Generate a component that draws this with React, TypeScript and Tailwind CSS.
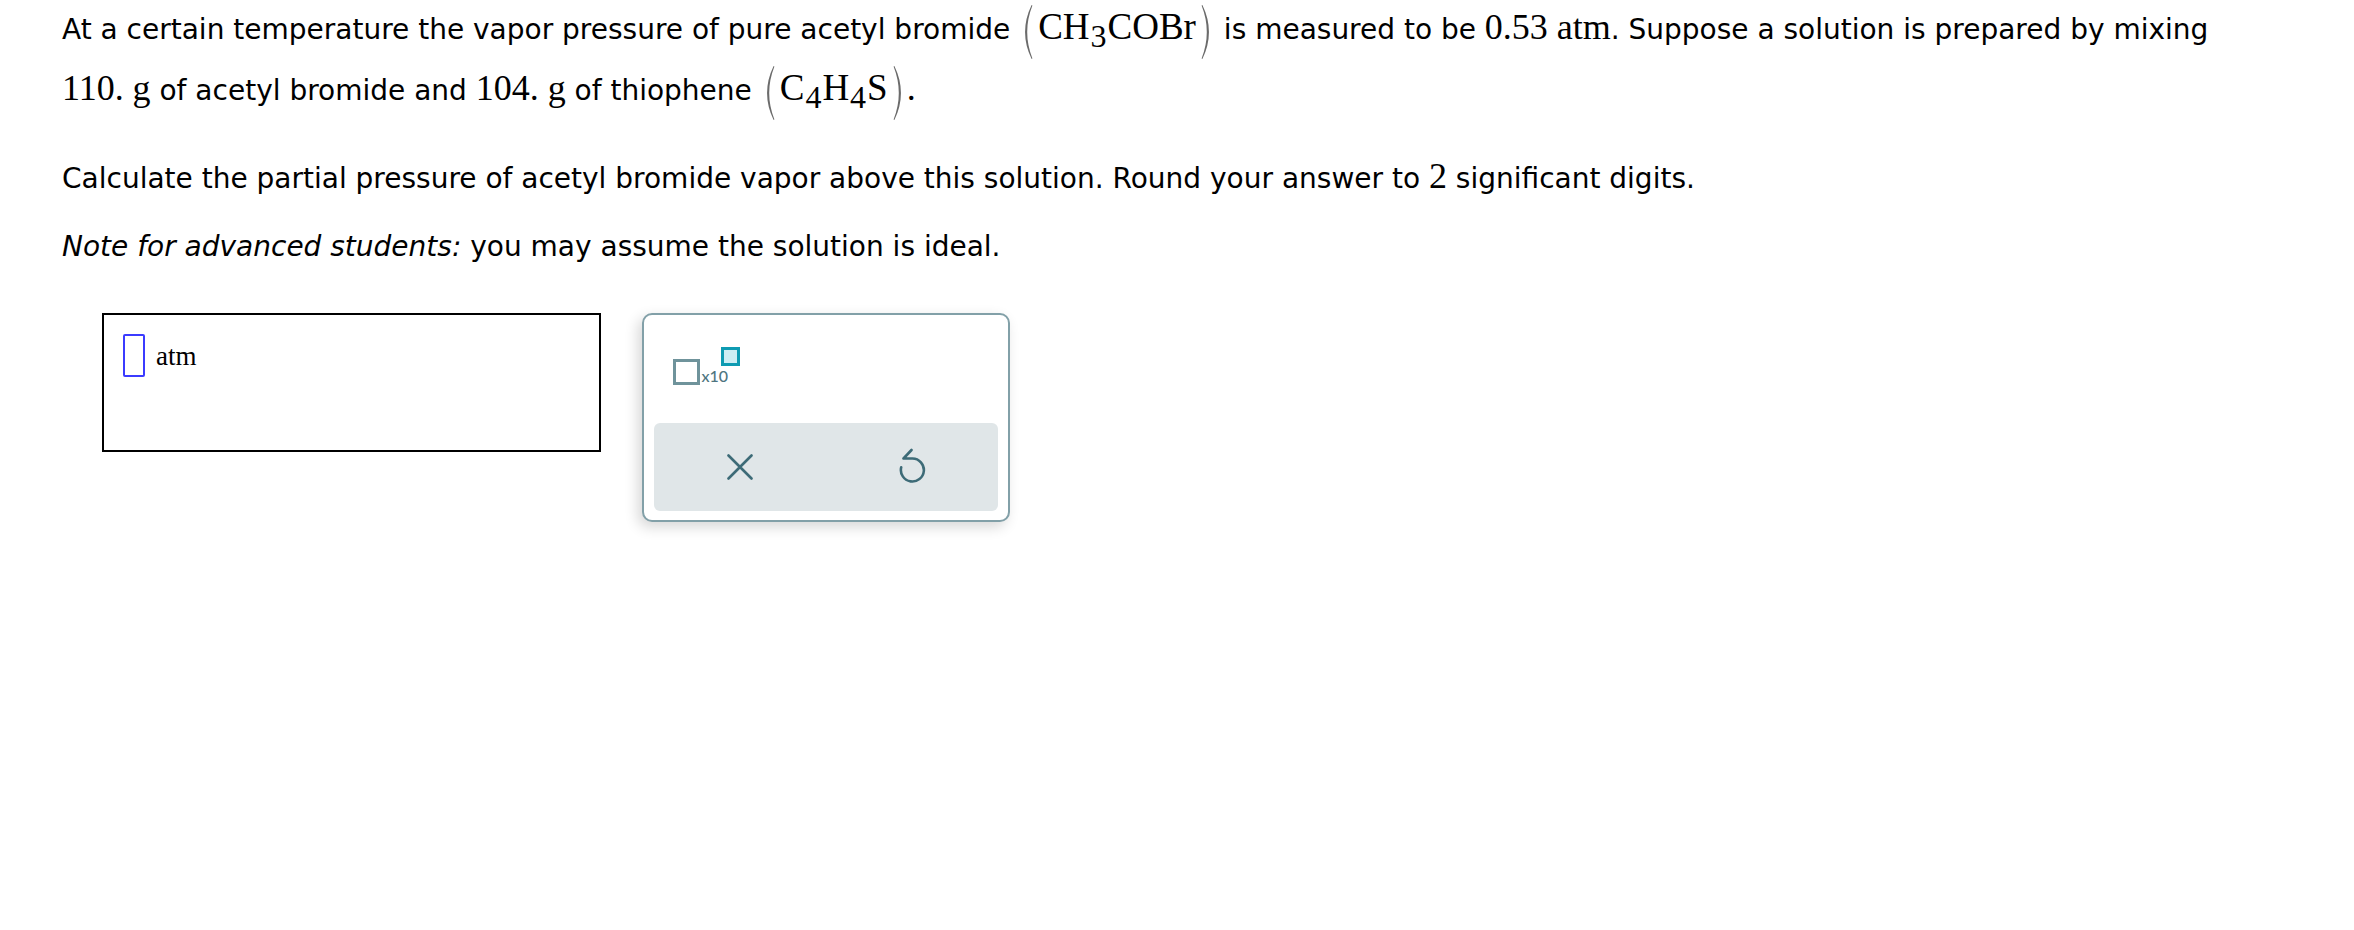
import React from 'react';

const M: React.FC<{ children: React.ReactNode; big?: boolean }> = ({ children, big }) => (
  <span className={`font-['Liberation_Serif',serif] leading-none ${big ? 'text-[37px]' : 'text-[36px]'}`}>{children}</span>
);

const Sub: React.FC<{ children: React.ReactNode }> = ({ children }) => (
  <span className="relative top-[8px] mx-[1px] text-[32px] leading-none">{children}</span>
);

const Paren: React.FC<{ right?: boolean }> = ({ right }) => (
  <svg
    width="14"
    height="56"
    viewBox="0 0 14 56"
    className={`inline-block align-[-21px] ${right ? '-scale-x-100' : ''}`}
  >
    <path d="M12.6 1 Q-0.5 28 12.6 55 L13.4 54.4 Q3 28 13.4 1.6 Z" fill="#6b6b6b" />
  </svg>
);

const Chem: React.FC<{ children: React.ReactNode }> = ({ children }) => (
  <span className="whitespace-nowrap">
    <Paren />
    <span className="mx-[5px]">
      <M big>{children}</M>
    </span>
    <Paren right />
  </span>
);

const XTen = () => (
  <svg width="72" height="40" viewBox="0 0 72 40">
    <rect x="1.5" y="13.5" width="24" height="23" fill="none" stroke="#6f939b" strokeWidth="3" />
    <text x="28.5" y="35" fontFamily="Lato, sans-serif" fontSize="16" fontWeight="500" fill="#4e7580">x10</text>
    <rect x="49.5" y="1.5" width="16" height="16" fill="#cdeef4" stroke="#0e9bb2" strokeWidth="3" />
  </svg>
);

const App: React.FC = () => {
  return (
    <div className="w-[2354px] h-[930px] bg-white text-black font-['DejaVu_Sans',sans-serif] text-[28px] pl-[62px]">
      <div className="-mt-[1px] leading-[61px] whitespace-nowrap">
        At a certain temperature the vapor pressure of pure acetyl bromide{' '}
        <Chem>
          CH<Sub>3</Sub>COBr
        </Chem>{' '}
        is measured to be <M>0.53</M> <M>atm</M>. Suppose a solution is prepared by mixing
      </div>
      <div className="leading-[61px] whitespace-nowrap">
        <M>110.</M> <M>g</M> of acetyl bromide and <M>104.</M> <M>g</M> of thiophene{' '}
        <Chem>
          C<Sub>4</Sub>H<Sub>4</Sub>S
        </Chem>
        <M>.</M>
      </div>

      <p className="mt-[37px] leading-[40px]">
        Calculate the partial pressure of acetyl bromide vapor above this solution. Round your answer to <M>2</M> significant digits.
      </p>
      <p className="mt-[28px] leading-[40px]">
        <i>Note for advanced students:</i> you may assume the solution is ideal.
      </p>

      <div className="mt-[46px] ml-[40px] flex items-start gap-[41px]">
        <div className="w-[499px] h-[139px] border-2 border-black p-[19px] flex items-start gap-[11px]">
          <div className="w-[22px] h-[43px] border-2 border-[#3b3bff] rounded-[2px]" />
          <span className="mt-[9px] font-['Liberation_Serif',serif] text-[27px] leading-none">atm</span>
        </div>

        <div className="w-[368px] h-[209px] border-2 border-[#82a0a8] rounded-[10px] bg-white shadow-[-4px_5px_14px_rgba(0,0,0,0.16)] px-[10px] pb-[9px] flex flex-col">
          <div className="h-[108px] pl-[19px] pt-[32px]">
            <XTen />
          </div>
          <div className="h-[88px] rounded-[6px] bg-[#e0e6e8] grid grid-cols-2">
            <div className="flex items-center justify-center">
              <svg width="26" height="26" viewBox="0 0 26 26">
                <path d="M1.5 1.5 L24.5 24.5 M24.5 1.5 L1.5 24.5" stroke="#3d6b77" strokeWidth="2.6" strokeLinecap="round" />
              </svg>
            </div>
            <div className="flex items-center justify-center">
              <svg width="29" height="35" viewBox="0 0 29 35" className="mb-[4px]">
                <path
                  d="M14.5 10.5 A11.5 11.5 0 1 1 3.2 19.3 M13.5 2 L5.5 10.5 L14.5 10.5"
                  fill="none"
                  stroke="#3d6b77"
                  strokeWidth="2.6"
                  strokeLinecap="round"
                  strokeLinejoin="round"
                />
              </svg>
            </div>
          </div>
        </div>
      </div>
    </div>
  );
};

export default App;
